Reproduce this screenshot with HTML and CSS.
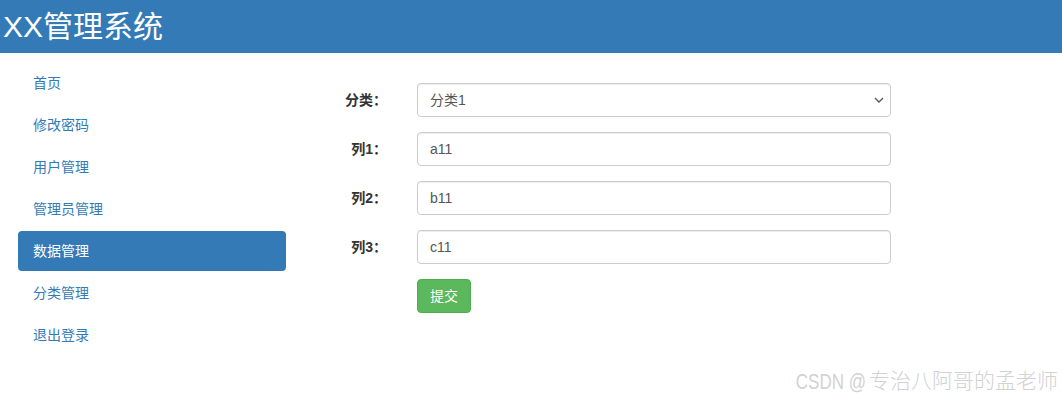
FILE: index.html
```html
<!DOCTYPE html>
<html lang="zh-CN">
<head>
<meta charset="utf-8">
<title>XX管理系统</title>
<link rel="stylesheet" href="styles.css">
</head>
<body>
<header class="topbar">
  <h1 class="brand">XX管理系统</h1>
</header>
<div class="main">
  <ul class="nav">
    <li><a href="#">首页</a></li>
    <li><a href="#">修改密码</a></li>
    <li><a href="#">用户管理</a></li>
    <li><a href="#">管理员管理</a></li>
    <li class="active"><a href="#">数据管理</a></li>
    <li><a href="#">分类管理</a></li>
    <li><a href="#">退出登录</a></li>
  </ul>
  <form class="form">
    <div class="row">
      <label class="label">分类：</label>
      <div class="select-wrap">
        <select class="control select"><option>分类1</option></select>
        <svg class="chev" width="10" height="6" viewBox="0 0 10 6"><path d="M1 1 L5 5 L9 1" fill="none" stroke="#555" stroke-width="1.3"/></svg>
      </div>
    </div>
    <div class="row">
      <label class="label">列1：</label>
      <input class="control" type="text" value="a11">
    </div>
    <div class="row">
      <label class="label">列2：</label>
      <input class="control" type="text" value="b11">
    </div>
    <div class="row">
      <label class="label">列3：</label>
      <input class="control" type="text" value="c11">
    </div>
    <div class="row">
      <span class="label"></span>
      <button class="btn" type="button">提交</button>
    </div>
  </form>
</div>
<div class="watermark"><span class="wm-latin">CSDN @</span>专治八阿哥的孟老师</div>
</body>
</html>
```
FILE: styles.css
```css
* { box-sizing: border-box; }
html, body { margin: 0; padding: 0; }
body {
  font-family: "Liberation Sans", "Noto Sans CJK SC", sans-serif;
  font-size: 14px;
  line-height: 20px;
  color: #333;
  background: #fff;
  width: 1062px;
  height: 401px;
  position: relative;
  overflow: hidden;
}
.topbar {
  background: #337ab7;
  height: 53px;
  padding-left: 3px;
}
.brand {
  margin: 0;
  font-weight: normal;
  font-size: 30px;
  line-height: 53px;
  color: #fff;
}
.main {
  display: flex;
  align-items: flex-start;
}
.nav {
  list-style: none;
  margin: 10px 0 0 18px;
  padding: 0;
  width: 268px;
  display: flex;
  flex-direction: column;
  gap: 2px;
}
.nav a {
  display: block;
  padding: 10px 15px;
  color: #337ab7;
  text-decoration: none;
  border-radius: 4px;
}
.nav .active a {
  background: #337ab7;
  color: #fff;
}
.form {
  margin: 30px 0 0 16px;
  display: flex;
  flex-direction: column;
  gap: 15px;
}
.row {
  display: flex;
  align-items: flex-start;
}
.label {
  width: 100px;
  padding: 7px 15px 7px 0;
  text-align: right;
  font-weight: bold;
  margin-right: 15px;
}
.control {
  width: 474px;
  height: 34px;
  padding: 6px 12px;
  font-family: "Liberation Sans", "Noto Sans CJK SC", sans-serif;
  font-size: 14px;
  line-height: 20px;
  color: #555;
  background: #fff;
  border: 1px solid #ccc;
  border-radius: 4px;
  box-shadow: inset 0 1px 1px rgba(0,0,0,.075);
  outline: none;
}
.select-wrap {
  position: relative;
  width: 474px;
}
.select {
  appearance: none;
  -webkit-appearance: none;
}
.chev {
  position: absolute;
  right: 7px;
  top: 14px;
  pointer-events: none;
}
.btn {
  height: 34px;
  padding: 6px 12px;
  font-family: "Liberation Sans", "Noto Sans CJK SC", sans-serif;
  font-size: 14px;
  line-height: 20px;
  color: #fff;
  background: #5cb85c;
  border: 1px solid #4cae4c;
  border-radius: 4px;
}
.watermark {
  position: absolute;
  right: 4px;
  bottom: 6px;
  font-size: 21px;
  line-height: 24px;
  font-weight: 300;
  color: #d2d2d2;
  white-space: nowrap;
}
.wm-latin {
  display: inline-block;
  font-size: 17px;
  transform: scaleY(1.25);
  margin-right: 3px;
}
```
